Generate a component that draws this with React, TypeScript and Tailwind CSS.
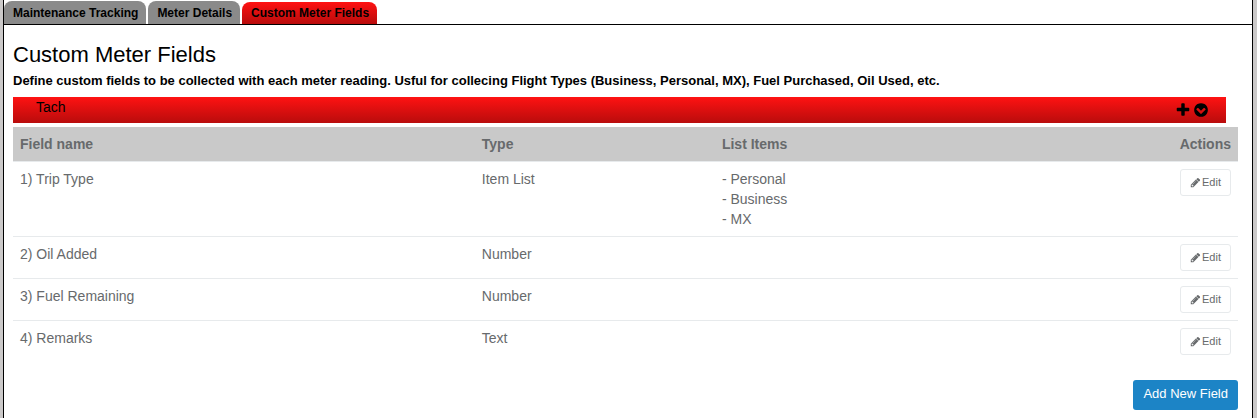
import { ReactNode } from 'react';

const tabs = ['Maintenance Tracking', 'Meter Details', 'Custom Meter Fields'];

type Field = { name: string; type: string; items: string[] };

const fields: Field[] = [
  { name: 'Trip Type', type: 'Item List', items: ['Personal', 'Business', 'MX'] },
  { name: 'Oil Added', type: 'Number', items: [] },
  { name: 'Fuel Remaining', type: 'Number', items: [] },
  { name: 'Remarks', type: 'Text', items: [] },
];

function Glyph({ className, children }: { className: string; children: ReactNode }) {
  return (
    <svg viewBox="0 0 1792 1792" fill="currentColor" className={className} aria-hidden="true">
      {children}
    </svg>
  );
}

function PlusIcon() {
  return (
    <Glyph className="size-4">
      <path d="M1600 736v192q0 40-28 68t-68 28h-416v416q0 40-28 68t-68 28h-192q-40 0-68-28t-28-68v-416h-416q-40 0-68-28t-28-68v-192q0-40 28-68t68-28h416v-416q0-40 28-68t68-28h192q40 0 68 28t28 68v416h416q40 0 68 28t28 68z" />
    </Glyph>
  );
}

function ChevronCircleIcon() {
  return (
    <Glyph className="size-4">
      <path d="M941 1325l454-454q19-19 19-45t-19-45l-102-102q-19-19-45-19t-45 19l-307 307-307-307q-19-19-45-19t-45 19l-102 102q-19 19-19 45t19 45l454 454q19 19 45 19t45-19zm723-429q0 209-103 385.500t-279.500 279.500-385.500 103-385.500-103-279.500-279.500-103-385.500 103-385.500 279.500-279.500 385.500-103 385.500 103 279.500 279.500 103 385.500z" />
    </Glyph>
  );
}

function PencilIcon() {
  return (
    <Glyph className="mb-px size-[11px]">
      <path d="M491 1536l91-91-235-235-91 91v107h128v128h107zm523-928q0-22-22-22-10 0-17 7l-542 542q-7 7-7 17 0 22 22 22 10 0 17-7l542-542q7-7 7-17zm-54-192l416 416-832 832h-416v-416zm683 96q0 53-37 90l-166 166-416-416 166-165q36-38 90-38 53 0 91 38l235 234q37 39 37 91z" />
    </Glyph>
  );
}

export default function App() {
  return (
    <div className="min-h-screen bg-[#cbc9c9] pl-[3px] pr-1 font-['Liberation_Sans',Arial,sans-serif]">
      <div className="min-h-screen border-x border-black bg-white">
        {/* Tabs */}
        <nav className="flex items-end gap-[2px] border-b border-black pt-px text-xs font-bold text-black">
          {tabs.map((tab, i) => (
            <button
              key={tab}
              type="button"
              className={
                i === tabs.length - 1
                  ? 'h-[22px] rounded-t-lg bg-gradient-to-b from-[#ff1212] to-[#b90c0c] pr-2 pl-[9px]'
                  : 'h-[23px] rounded-t-lg bg-[#8a8a8a] pr-2 pl-[9px]'
              }
            >
              {tab}
            </button>
          ))}
        </nav>

        <main className="pl-[9px] pr-[14px] pt-4">
          <h1 className="text-[22px] leading-7 text-black">Custom Meter Fields</h1>
          <p className="pt-[2px] text-[13px] leading-5 font-bold text-black">
            Define custom fields to be collected with each meter reading. Usful for collecing Flight Types (Business,
            Personal, MX), Fuel Purchased, Oil Used, etc.
          </p>

          {/* Meter heading */}
          <div className="mt-[6px] mr-3 flex h-[26px] items-start justify-between bg-gradient-to-b from-[#ff1212] to-[#b90c0c] pr-[17px] pl-[23px] text-black">
            <h2 className="text-sm leading-5">Tach</h2>
            <div className="flex gap-[2px] pt-[5px]">
              <button type="button" aria-label="Add field">
                <PlusIcon />
              </button>
              <button type="button" aria-label="Toggle section">
                <ChevronCircleIcon />
              </button>
            </div>
          </div>

          <table className="mt-1 w-full table-fixed border-collapse text-left text-sm text-[#676a6c]">
            <thead>
              <tr className="border-b border-[#e7eaec] bg-[#c9c9c9]">
                <th className="w-[37.7%] p-[7px]">Field name</th>
                <th className="w-[19.6%] p-[7px]">Type</th>
                <th className="p-[7px]">List Items</th>
                <th className="w-24 p-[7px] text-right">Actions</th>
              </tr>
            </thead>
            <tbody>
              {fields.map((field, i) => (
                <tr key={field.name} className="border-b border-[#e7eaec] align-top last:border-b-0">
                  <td className="p-[7px]">
                    {i + 1}) {field.name}
                  </td>
                  <td className="p-[7px]">{field.type}</td>
                  <td className="p-[7px]">
                    {field.items.map((item) => (
                      <div key={item}>- {item}</div>
                    ))}
                  </td>
                  <td className="p-[7px]">
                    <button
                      type="button"
                      className="ml-auto flex h-[27px] items-center gap-px rounded-[3px] border border-[#e7eaec] bg-white px-[9px] text-[11px]"
                    >
                      <PencilIcon />
                      Edit
                    </button>
                  </td>
                </tr>
              ))}
            </tbody>
          </table>

          <div className="flex justify-end pt-[18px]">
            <button type="button" className="h-[30px] rounded-[3px] bg-[#1c84c6] px-[10px] pb-[2px] text-[13px] text-white">
              Add New Field
            </button>
          </div>
        </main>
      </div>
    </div>
  );
}
